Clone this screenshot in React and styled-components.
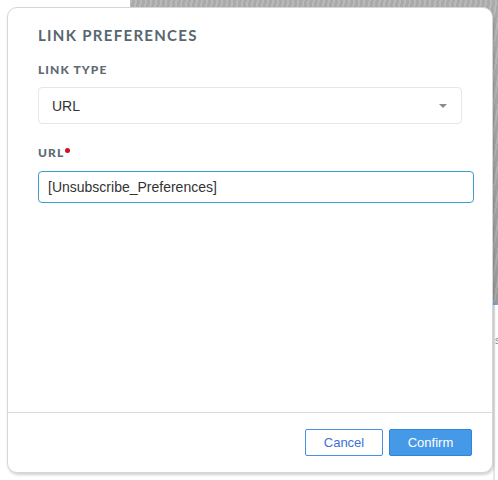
import React from "react";
import styled, { createGlobalStyle } from "styled-components";

const Global = createGlobalStyle`
  html, body { margin: 0; padding: 0; background: #fff; }
  body { width: 498px; height: 480px; overflow: hidden; font-family: "Liberation Sans", Arial, sans-serif; }
  * { box-sizing: border-box; }
`;

const Page = styled.div`
  position: relative;
  width: 498px;
  height: 480px;
  background: #fff;
  overflow: hidden;
`;

const Hero = styled.div`
  margin-left: 130px;
  height: 305px;
  background:
    repeating-linear-gradient(100deg, rgba(255,255,255,0.08) 0 2px, rgba(0,0,0,0.05) 2px 5px),
    linear-gradient(180deg, #b3b3b3, #a2a2a2);
  border-bottom: 2px solid #6aa6e2;
`;

const SideRule = styled.div`
  margin-left: 493px;
  height: 175px;
  border-left: 2px solid #e6e6e6;
  padding-top: 30px;
  font-size: 10px;
  color: #888;
`;

const Modal = styled.div`
  position: absolute;
  left: 7px;
  top: 7px;
  width: 486px;
  height: 466px;
  background: #fff;
  border: 1px solid #d6d6d6;
  border-radius: 10px;
  box-shadow: 1px 2px 3px rgba(0, 0, 0, 0.18);
  display: flex;
  flex-direction: column;
`;

const Body = styled.div`
  flex: 1;
  padding: 18px 0 0 30px;
  display: flex;
  flex-direction: column;
`;

const Title = styled.h2`
  margin: 0;
  font-family: Lato, "Open Sans", sans-serif;
  font-weight: 700;
  font-size: 15px;
  line-height: 18px;
  letter-spacing: 1.3px;
  color: #58666f;
`;

const Label = styled.div`
  margin-top: ${(p) => p.$mt}px;
  display: flex;
  align-items: flex-start;
  font-family: Lato, "Open Sans", sans-serif;
  font-weight: 900;
  font-size: 12px;
  line-height: 14.4px;
  letter-spacing: 1.1px;
  color: #5d6a72;
`;

const Required = styled.span`
  width: 5px;
  height: 5px;
  margin: 2px 0 0 1px;
  border-radius: 50%;
  background: #d0101f;
`;

const Select = styled.div`
  margin-top: 10px;
  width: 424px;
  height: 37px;
  border: 1px solid #e6e6e6;
  border-radius: 4px;
  padding: 0 14px 0 13px;
  display: flex;
  align-items: center;
  justify-content: space-between;
  font-family: "Liberation Sans", Arial, sans-serif;
  font-size: 14px;
  color: #333;
`;

const Caret = styled.span`
  width: 0;
  height: 0;
  border-left: 4px solid transparent;
  border-right: 4px solid transparent;
  border-top: 4px solid #8a8a8a;
`;

const Input = styled.div`
  margin-top: 10px;
  width: 436px;
  height: 32px;
  border: 1px solid #3a9fc7;
  border-radius: 4px;
  padding: 0 9px;
  display: flex;
  align-items: center;
  font-family: "Liberation Sans", Arial, sans-serif;
  font-size: 14px;
  color: #333;
`;

const Footer = styled.div`
  height: 60px;
  border-top: 1px solid #dcdcdc;
  padding: 16px 20px 0 0;
  display: flex;
  justify-content: flex-end;
  align-items: flex-start;
  gap: 6px;
`;

const Button = styled.button`
  height: 27px;
  width: ${(p) => p.$w}px;
  border-radius: 2px;
  border: 1px solid ${(p) => (p.$primary ? "#2e86dc" : "#4a8fe0")};
  background: ${(p) => (p.$primary ? "#4599e7" : "#fff")};
  color: ${(p) => (p.$primary ? "#fff" : "#3d71d8")};
  font-family: "Liberation Sans", Arial, sans-serif;
  font-size: 13px;
  padding: 0;
  cursor: pointer;
`;

export default function App() {
  return (
    <Page>
      <Global />
      <Hero />
      <SideRule>s</SideRule>
      <Modal>
        <Body>
          <Title>LINK PREFERENCES</Title>
          <Label $mt={19}>LINK TYPE</Label>
          <Select>
            <span>URL</span>
            <Caret />
          </Select>
          <Label $mt={22}>
            URL
            <Required />
          </Label>
          <Input>[Unsubscribe_Preferences]</Input>
        </Body>
        <Footer>
          <Button $w={78}>Cancel</Button>
          <Button $primary $w={83}>Confirm</Button>
        </Footer>
      </Modal>
    </Page>
  );
}
